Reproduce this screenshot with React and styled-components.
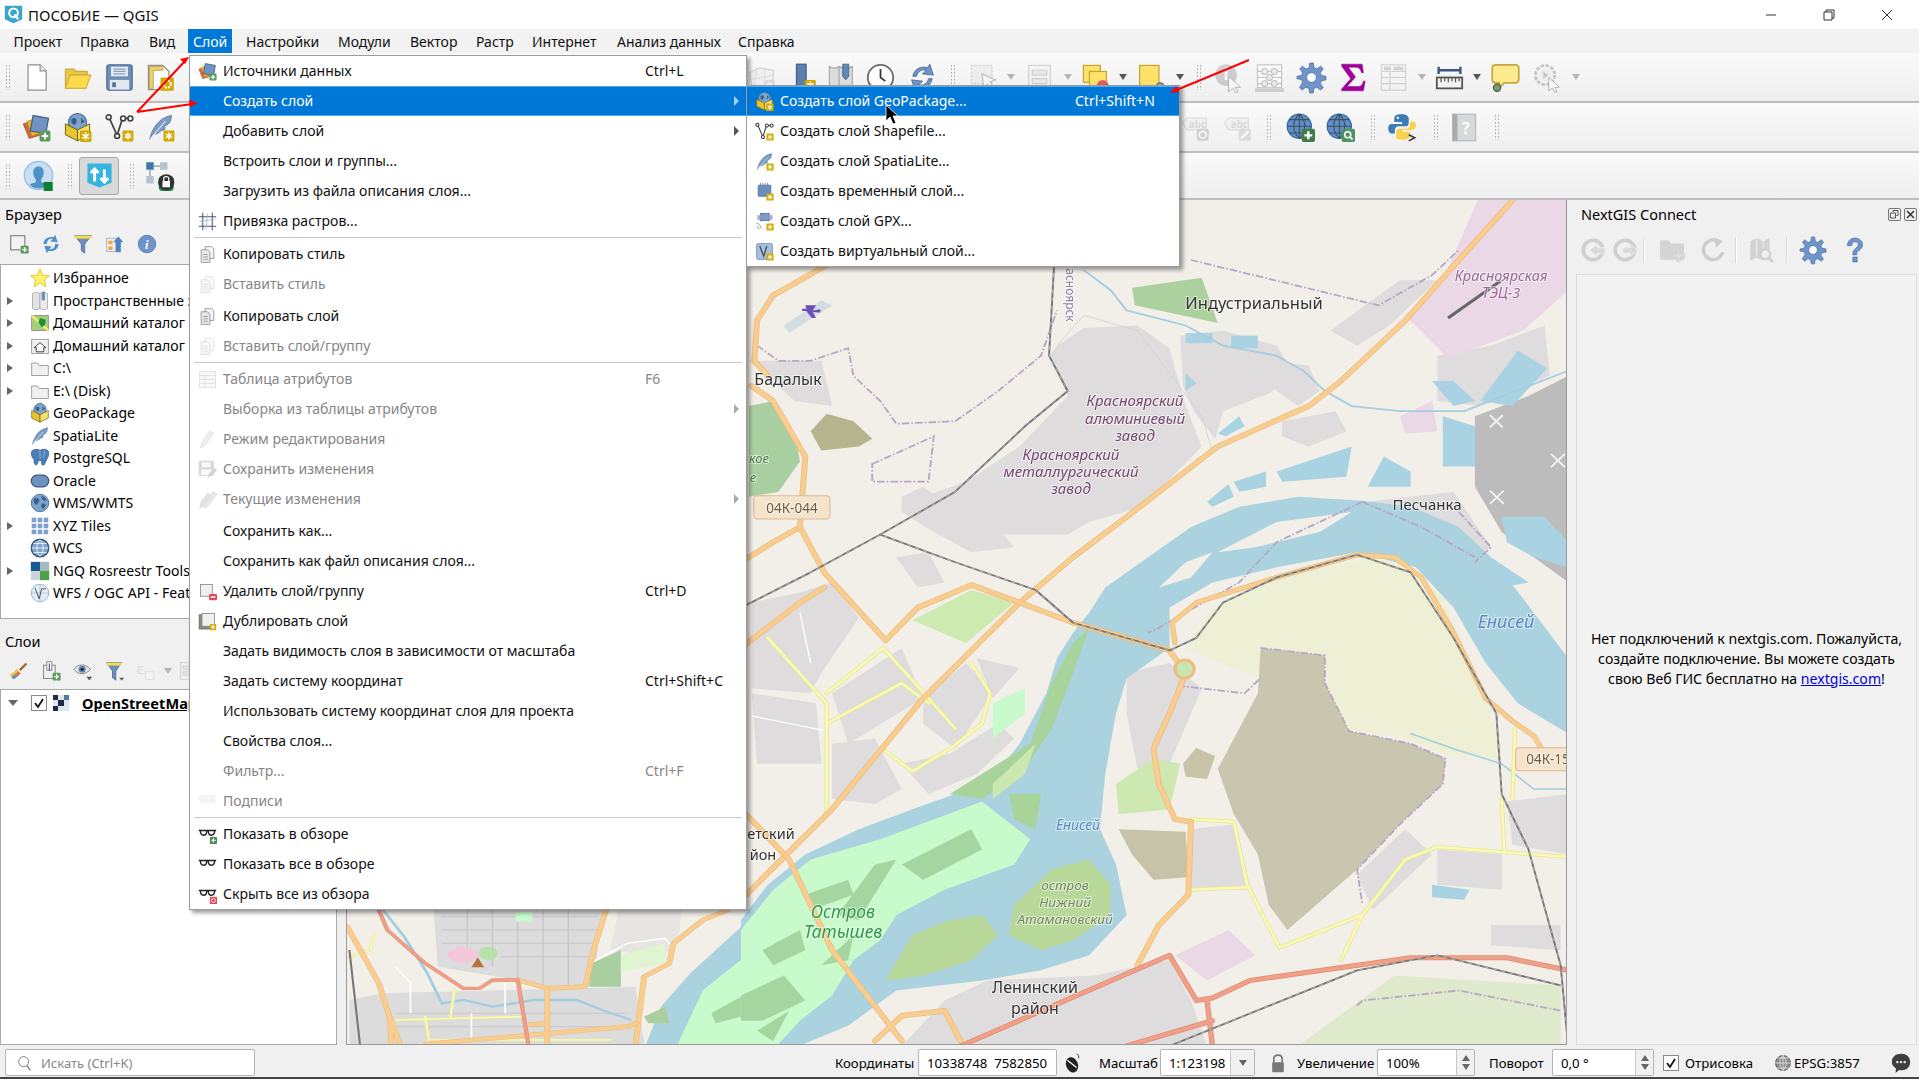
import React from "react";
import styled, { createGlobalStyle } from "styled-components";

const Global = createGlobalStyle`
  html, body { margin: 0; padding: 0; background: #f0f0f0; overflow: hidden; }
  #root { width: 1919px; height: 1079px; }
  * { box-sizing: border-box; }
`;

const FONT = `"Noto Sans", "Open Sans", sans-serif`;

const Window = styled.div`
  position: relative; width: 1919px; height: 1079px; display: flex; flex-direction: column;
  background: #f0f0f0; font: 14px/20px ${FONT}; color: #000; overflow: hidden;
  border-bottom: 2px solid #444;
`;
const TitleBar = styled.div`
  height: 29px; flex: none; background: #fff; display: flex; align-items: center; padding: 0 6px 0 4px; gap: 5px; font-size: 15px; color: #111;
`;
const TitleText = styled.span` flex: 1; `;
const WinBtn = styled.div`
  width: 53px; height: 29px; display: flex; align-items: center; justify-content: center; flex: none;
`;
const MenuBar = styled.div`
  height: 24px; flex: none; display: flex; align-items: center; padding-left: 4px; background: #f2f2f2;
`;
const MenuTop = styled.div`
  width: ${p => p.$w}px; height: 26px; padding-left: ${p => p.$pad}px; line-height: 26px; white-space: nowrap; flex: none; margin-top: 2px;
  background: ${p => (p.$on ? "#0078d7" : "transparent")}; color: ${p => (p.$on ? "#fff" : "#111")};
`;
const Toolbar = styled.div`
  height: ${p => p.$h}px; flex: none; display: flex; align-items: center; border-bottom: 2px solid #bdbdbd;
  background: linear-gradient(#fafafa, #efefef);
`;
const Tool = styled.div`
  width: ${p => p.$w}px; height: 100%; flex: none; display: flex; align-items: center; justify-content: center;
`;
const SunkenTool = styled(Tool)`
  height: 38px; background: #d9d9d9; border: 1px solid #a8a8a8; border-radius: 3px;
`;
const DropArrow = styled.div`
  width: ${p => p.$w}px; flex: none; height: 100%; display: flex; align-items: center; justify-content: center;
  &::after { content: ""; border-left: 4.5px solid transparent; border-right: 4.5px solid transparent; border-top: 6px solid ${p => (p.$off ? "#b5b5b5" : "#555")}; }
`;
const Grip = styled.div`
  width: ${p => p.$w}px; flex: none; height: 100%; display: flex; align-items: center; justify-content: center;
  &::after { content: ""; width: 6px; height: 26px; background-image: radial-gradient(circle, #b0b0b0 0.8px, transparent 1px); background-size: 3px 3.5px; }
`;
const Gap = styled.div` width: ${p => p.$w}px; flex: none; `;

const Main = styled.div` flex: 1; min-height: 0; display: flex; `;
const LeftDock = styled.div` width: 337px; flex: none; display: flex; flex-direction: column; `;
const DockTitle = styled.div` height: 28px; flex: none; padding-left: 5px; line-height: 28px; font-size: 14.5px; `;
const DockTools = styled.div` height: ${p => p.$h}px; flex: none; display: flex; align-items: center; padding: 0 0 ${p => p.$pb || 0}px ${p => p.$pl || 0}px; `;
const TreeFrame = styled.div`
  height: ${p => p.$h}px; flex: ${p => (p.$grow ? 1 : "none")}; background: #fff; border: 1px solid #a9a9a9; padding-top: ${p => p.$pt}px; overflow: hidden; letter-spacing: .06px;
`;
const TreeRow = styled.div` height: 22.5px; display: flex; align-items: center; white-space: nowrap; `;
const TreeArrow = styled.div`
  width: 25px; flex: none; padding-left: 6px; display: flex;
  &::after { content: ""; visibility: ${p => (p.$show ? "visible" : "hidden")}; border-top: 4.5px solid transparent; border-bottom: 4.5px solid transparent; border-left: 6px solid #666; }
`;
const TreeIcon = styled.div` width: 27px; flex: none; display: flex; justify-content: center; `;
const Splitter = styled.div` height: 8px; flex: none; `;
const LayerRow = styled.div` height: 26px; display: flex; align-items: center; white-space: nowrap; `;
const CollapseArrow = styled.div`
  width: 30px; flex: none; padding-left: 7px;
  &::after { content: ""; display: block; width: 0; border-left: 5px solid transparent; border-right: 5px solid transparent; border-top: 6px solid #666; }
`;
const CheckBox = styled.div`
  width: 16px; height: 16px; margin-left: ${p => p.$ml || 0}px; flex: none; background: #fff; border: 1px solid #8a8a8a; display: flex; align-items: center; justify-content: center;
`;
const LayerName = styled.span` font-weight: 700; text-decoration: underline; margin-left: 8px; font-size: 14.5px; `;
const HHandle = styled.div` width: 9px; flex: none; `;
const MapBox = styled.div`
  width: 1221px; flex: none; border: 1px solid #9a9a9a; border-top: none; overflow: hidden; display: flex; background: #f2efe9;
`;
const RightDock = styled.div` flex: 1; min-width: 0; padding-left: 9px; display: flex; flex-direction: column; `;
const DockHead = styled.div` height: 28px; flex: none; display: flex; align-items: center; padding-left: 5px; padding-right: 2px; font-size: 14.5px; gap: 3px; `;
const DockName = styled.div` flex: 1; `;
const FloatBtn = styled.div`
  width: 13px; height: 13px; border: 1px solid #777; border-radius: 2px; display: flex; align-items: center; justify-content: center;
`;
const VSep = styled.div` width: 1px; height: 26px; background: #d8d8d8; flex: none; margin: 0 ${p => p.$m || 0}px; box-shadow: 1px 0 0 #fff; `;
const NoteFrame = styled.div`
  flex: 1; margin-right: 2px; border: 1px solid #dcdcdc; background: #f2f2f2; display: flex; align-items: center; justify-content: center;
  text-align: center; font-size: 14.1px; line-height: 20px;
`;
const NoteText = styled.div` margin-top: -2px; `;
const Link = styled.span` color: #0000e0; text-decoration: underline; `;

const StatusBar = styled.div`
  height: 32px; flex: none; display: flex; align-items: center; font-size: 13.2px; padding-top: 3px;
`;
const SearchBox = styled.div`
  width: 250px; height: 27px; margin-left: 5px; background: #fff; border: 1px solid #b5b5b5; border-radius: 2px; display: flex; align-items: center; padding-left: 11px; gap: 8px; color: #888; font-size: 13px; flex: none;
`;
const Label = styled.div` width: ${p => p.$w}px; margin-left: ${p => p.$ml || 0}px; flex: none; white-space: nowrap; `;
const Field = styled.div`
  width: ${p => p.$w}px; height: 27px; margin-left: ${p => p.$ml || 0}px; flex: none; background: #fff; border: 1px solid #b5b5b5; border-radius: 2px; display: flex; align-items: center; padding-left: 8px; white-space: pre;
`;
const FieldText = styled.div` flex: 1; `;
const SpinCol = styled.div`
  width: ${p => p.$w || 18}px; align-self: stretch; background: #f0f0f0; border-left: 1px solid #c8c8c8; display: flex; flex-direction: column; align-items: center; justify-content: center; gap: 3px;
`;
const Up = styled.div` border-left: 4px solid transparent; border-right: 4px solid transparent; border-bottom: 6px solid #666; `;
const Down = styled.div` border-left: 4px solid transparent; border-right: 4px solid transparent; border-top: 6px solid #666; `;
const StatusIcon = styled.div` width: ${p => p.$w}px; margin-left: ${p => p.$ml || 0}px; flex: none; display: flex; justify-content: center; `;

const PopMenu = styled.div`
  position: absolute; left: ${p => p.$x}px; top: ${p => p.$y}px; width: ${p => p.$w}px; background: #fff; border: 1px solid #9c9c9c; box-shadow: 3px 3px 4px rgba(0,0,0,.38);
`;
const MRow = styled.div`
  height: 30px; display: grid; grid-template-columns: 33px ${p => p.$lw}px 1fr 12px; align-items: center; white-space: nowrap;
  color: ${p => (p.$on ? "#fff" : p.$off ? "#868686" : "#111")};
  background: ${p => (p.$on ? "#0078d7" : "transparent")};
  box-shadow: ${p => (p.$on ? "inset 0 1px 0 #52a8ec, inset 0 -1px 0 #52a8ec" : "none")};
`;
const MIcon = styled.div` display: flex; justify-content: center; padding-left: 2px; `;
const MArrow = styled.div`
  &::after { content: ""; visibility: ${p => (p.$show ? "visible" : "hidden")}; display: block; width: 0; border-top: 5px solid transparent; border-bottom: 5px solid transparent; border-left: 5px solid ${p => (p.$on ? "#9fd0f5" : p.$off ? "#aaa" : "#555")}; }
`;
const MSep = styled.div` height: ${p => p.$h}px; display: flex; align-items: center; padding: 0 4px; &::after { content: ""; flex: 1; height: 1px; background: ${p => (p.$line ? "#c8c8c8" : "transparent")}; } `;
const Overlay = styled.svg` position: absolute; left: 0; top: 0; pointer-events: none; `;
const IconSvg = styled.svg` flex: none; display: block; opacity: ${p => (p.$off ? 0.32 : 1)}; filter: ${p => (p.$off ? "grayscale(1)" : "none")}; overflow: visible; `;
const MapSvg = styled.svg` display: block; flex: none; filter: blur(.55px); `;

/* ---------- icons ---------- */
const StarB = ({ x = 14, y = 14, s = 10 }) => (
  <g transform={`translate(${x} ${y}) scale(${s / 10})`}>
    <rect width="10" height="10" rx="1" fill="#d1a900" />
    <path d="M5 1.5v7M2 3.2l6 3.6M8 3.2L2 6.8" stroke="#fff" strokeWidth="1.3" />
  </g>
);
const PlusB = ({ x = 14, y = 14, s = 10, c = "#5f9a5f" }) => (
  <g transform={`translate(${x} ${y}) scale(${s / 10})`}>
    <rect width="10" height="10" rx="1.5" fill={c} />
    <path d="M5 2v6M2 5h6" stroke="#fff" strokeWidth="1.8" />
  </g>
);
const Globe = ({ c = "#7ea3cd", e = "#3f6a99" }) => (
  <g>
    <circle cx="12" cy="12" r="10.5" fill={c} stroke={e} />
    <path d="M5 7c3-2 5-1 6 1s-1 3-2 5-3 1-4-1-1-3 0-5zM14 4c3 0 5 2 6 5-2 1-4 0-5-1s-2-3-1-4zM14 13c2-1 4 0 5 1-1 3-3 5-4 5s-2-4-1-6z" fill="#3c5f88" />
  </g>
);
const WebGlobe = ({ b }) => (
  <g>
    <circle cx="11" cy="11" r="10" fill="#5e8fc8" stroke="#2e6ca8" />
    <path d="M1 11h20M11 1v20M11 1c-6 5-6 15 0 20M11 1c6 5 6 15 0 20M3 5.5h16M3 16.5h16" stroke="#333" strokeWidth=".9" fill="none" opacity=".7" />
    {b}
  </g>
);
const Geo = () => (
  <g>
    <circle cx="12" cy="8" r="7.5" fill="#7ea3cd" stroke="#4a6f99" />
    <path d="M7 5c3-2 5 0 4 3s-5 2-4-3zM15 4l3 3-3 2z" fill="#3c5f88" />
    <path d="M2 9l10 5v9L2 18z" fill="#e7c62d" stroke="#6e5d10" strokeWidth=".8" />
    <path d="M22 9l-10 5v9l10-5z" fill="#f4e06a" stroke="#6e5d10" strokeWidth=".8" />
  </g>
);
const Feather = ({ c = "#7a9cc6" }) => (
  <g>
    <path d="M3 22C5 12 11 4 21 2c0 6-3 8-6 9 1 1 1 2 0 3-2 0-3 1-4 2-2 2-5 1-6 2z" fill={c} stroke="#56789f" strokeWidth=".7" />
    <path d="M3 22L16 7" stroke="#d9e4f0" strokeWidth=".9" />
  </g>
);
const Vnodes = () => (
  <g fill="none" stroke="#444" strokeWidth="1.4">
    <path d="M3.5 4L10 18.5 14.5 4.5H20" />
    <circle cx="3" cy="3.5" r="2" fill="#fff" /><circle cx="10" cy="19" r="2" fill="#fff" /><circle cx="15" cy="4.5" r="2" fill="#fff" /><circle cx="21" cy="4.5" r="2" fill="#fff" />
  </g>
);
const Stack = () => (
  <g>
    <path d="M1 9l10-3 5 12-10 3z" fill="#d3683c" stroke="#9c4a2a" strokeWidth=".6" />
    <path d="M4 7l10-3 4 12-10 3z" fill="#eeb32c" stroke="#b3851a" strokeWidth=".6" />
    <rect x="8" y="3" width="13" height="13" transform="rotate(10 14 9)" fill="#6f94c4" stroke="#465f82" />
    <PlusB x="14.5" y="14.5" s="9" />
  </g>
);
const Doc2 = () => (
  <g fill="#e8e8e8" stroke="#8c8c8c" strokeWidth="1">
    <path d="M9 2h8l3 3v12H9z" fill="#f4f4f4" />
    <path d="M4 6h8l3 3v13H4z" />
    <path d="M6.5 12h6M6.5 15h6M6.5 18h6" strokeWidth=".9" />
  </g>
);
const Folder = () => <path d="M2 6h7l2 3h11v12H2z" fill="#f0f0f0" stroke="#8f8f8f" />;
const Glasses = ({ b }) => (
  <g>
    <path d="M1 7h22M3 7c0 4 1 6 4 6s4-2 4-5M13 8c0 3 1 5 4 5s4-2 4-6" fill="none" stroke="#222" strokeWidth="1.8" />
    {b}
  </g>
);
const Page = () => (
  <g><rect x="3" y="3" width="15" height="15" fill="#efefef" stroke="#808080" /></g>
);
const Tag = ({ b }) => (
  <g>
    <path d="M1 8l4-4h16v10H5z" fill="#e6e6e6" stroke="#aaa" />
    <text x="6.5" y="12.2" fontSize="8" fontWeight="700" fontFamily={FONT} fill="#999">abc</text>
    {b}
  </g>
);

const ICONS = {
  new: <><path d="M5 1.5h10l5 5v16H5z" fill="#fff" stroke="#8e8e8e" /><path d="M15 1.5v5h5" fill="#eee" stroke="#8e8e8e" /></>,
  open: <><path d="M2 21V5h7l2 2h9v3H6L2 21z" fill="#e8c64a" stroke="#cfa93b" /><path d="M6 10h17l-4 11H2z" fill="#fdd94e" stroke="#d6b23e" /></>,
  save: <><rect x="1.5" y="1.5" width="21" height="21" rx="2" fill="#6f8fb8" stroke="#4f6e96" /><rect x="5" y="3" width="14" height="8" fill="#e6ecf3" /><path d="M7 5h10M7 7h10M7 9h10" stroke="#8aa1bd" /><rect x="4" y="14" width="16" height="8" fill="#e4e8ee" /><rect x="6" y="16" width="3" height="4" fill="#4f6e96" /></>,
  layout: <><path d="M2 2h12l5 5v15H2z" fill="#fff" stroke="#8e8e8e" /><path d="M3 3h11v3H6v15H3z" fill="#f3d36d" stroke="#b6943a" strokeWidth=".7" /><rect x="12" y="12" width="11" height="11" rx="1" fill="#d1a900" /><circle cx="17.5" cy="17.5" r="3" fill="none" stroke="#fff" strokeWidth="1.6" strokeDasharray="1.6 .8" /></>,
  stack: <Stack />,
  geoStar: <><Geo /><StarB x="14" y="14.5" s="9.5" /></>,
  geo: <Geo />,
  vecStar: <><Vnodes /><StarB x="14.5" y="14.5" s="9" /></>,
  featherStar: <><Feather /><StarB x="14.5" y="14.5" s="9" /></>,
  feather: <Feather />,
  user: <><circle cx="12" cy="12" r="11" fill="#c9def0" stroke="#9dc1dc" /><path d="M12 5c3 0 4 2 4 5 0 2-1 4-2 5v2l5 2c-2 2-4 3-7 3s-5-1-7-3l5-2v-2c-1-1-2-3-2-5 0-3 1-5 4-5z" fill="#4d93c8" /><rect x="16" y="17" width="7" height="7" fill="#0e7f2e" /></>,
  sync: <><path d="M2 2h20v16l-10 4-10-4z" fill="#35b4e0" /><path d="M8 17V7M4.8 10L8 6.5 11.2 10M16 7v10M12.8 14L16 17.5 19.2 14" fill="none" stroke="#fff" strokeWidth="2.4" /></>,
  network: <><rect x="1" y="1" width="6" height="6" fill="#3f78ad" /><rect x="12" y="1" width="6" height="6" fill="#b4c5cf" /><rect x="1" y="12" width="6" height="6" fill="#b4c5cf" /><path d="M7 4h5M4 7v5" stroke="#8d9aa5" /><rect x="11" y="12" width="12" height="12" rx="3" fill="#0f8a4a" /><circle cx="17" cy="17" r="6.5" fill="#333" /><rect x="14" y="16" width="6" height="5" fill="#fff" /><path d="M15 16v-2c0-2 4-2 4 0v2" fill="none" stroke="#fff" /></>,
  wire: <><path d="M2 8l8-4 12 2-1 14H4z" fill="#e4e4df" stroke="#8e8e8e" /><path d="M2 14l20-4M8 4l-2 16M15 5l-1 15" stroke="#9a9a9a" fill="none" strokeWidth=".7" /><StarB x="14" y="14" s="9" /></>,
  column: <><rect x="7" y="1" width="8" height="22" fill="#5c7fae" stroke="#3f5f8a" /><StarB x="14" y="14" s="9" /></>,
  mapPin: <><path d="M2 3c3 2 5 2 8 0v19c-3 2-5 2-8 0zM10 3c3 2 7 2 11 0v19c-3 2-7 2-11 0z" fill="#ddd" stroke="#aaa" /><path d="M13 1h5v10l-2.5 3-2.5-3z" fill="#6187b5" stroke="#44648c" strokeWidth=".7" /></>,
  clock: <><circle cx="12" cy="12" r="10.5" fill="#fff" stroke="#6a6a6a" strokeWidth="1.5" /><path d="M12 5v7l4 3" fill="none" stroke="#333" strokeWidth="1.4" /></>,
  refresh: <><path d="M4 11C5 5 11 2 16 4l2-3 3 9-9-1 3-3c-4-1-7 1-8 5z" fill="#6f94c4" stroke="#3c6a9e" strokeWidth=".7" /><path d="M20 13c-1 6-7 9-12 7l-2 3-3-9 9 1-3 3c4 1 7-1 8-5z" fill="#6f94c4" stroke="#3c6a9e" strokeWidth=".7" /></>,
  selectOff: <><rect x="2" y="2" width="17" height="15" fill="#ddd" stroke="#888" strokeDasharray="2 1" /><path d="M11 9l11 5-4.5 1.5L21 21l-2.5 2-3.5-5.5L12 21z" fill="#fff" stroke="#555" /></>,
  formOff: <><rect x="3" y="2" width="18" height="20" fill="#eee" stroke="#888" /><path d="M6 6h12v4H6zM6 13h12v4H6z" fill="#ccc" stroke="#888" /></>,
  yellowRed: <><rect x="2" y="2" width="14" height="14" fill="#fde26a" stroke="#c4a52d" /><rect x="7" y="7" width="14" height="14" fill="#fde26a" stroke="#c4a52d" /><circle cx="18" cy="19" r="5" fill="#e35b5b" /><path d="M15.5 19h5" stroke="#fff" strokeWidth="1.5" /></>,
  yellowSq: <><rect x="3" y="2" width="16" height="18" fill="#fde26a" stroke="#c4a52d" /><circle cx="20" cy="20" r="3.5" fill="#9aa7b5" stroke="#667" /></>,
  identOff: <><circle cx="10" cy="10" r="9" fill="#7b7b7b" /><path d="M10 7v7" stroke="#fff" strokeWidth="2.4" /><circle cx="10.3" cy="4.6" r="1.4" fill="#fff" /><path d="M12 11l10 9-4.5 .3 2.5 3.7-2.4 .6-2-4L12 24z" fill="#fff" stroke="#333" strokeWidth=".8" /></>,
  abacusOff: <><rect x="2" y="1.5" width="20" height="19" fill="#fff" stroke="#666" /><path d="M2 7h20M2 12h20M2 17h20" stroke="#666" /><circle cx="8" cy="7" r="2.4" fill="#ddd" stroke="#666" /><circle cx="16" cy="7" r="2.4" fill="#ddd" stroke="#666" /><circle cx="12" cy="12" r="2.4" fill="#ddd" stroke="#666" /><circle cx="8" cy="17" r="2.4" fill="#ddd" stroke="#666" /><circle cx="16" cy="17" r="2.4" fill="#ddd" stroke="#666" /><rect x="0" y="21" width="24" height="3" fill="#888" /></>,
  gear: <><path d="M10.5 0h3l.6 4 2.3 1 3.2-2.4 2.1 2.1L19.3 8l1 2.4 3.7.6v3l-3.7.6-1 2.4 2.4 3.3-2.1 2.1-3.2-2.4-2.4 1-.6 3.800h-3l-.6-3.800-2.4-1-3.2 2.4-2.1-2.1L4.700 16l-1-2.4L0 13v-2l3.700-.6 1-2.4L2.300 4.700l2.100-2.100L7.600 5l2.400-1z" fill="#6f94c9" stroke="#44699c" strokeWidth=".6" /><circle cx="12" cy="12" r="4" fill="#fff" stroke="#44699c" strokeWidth=".6" /></>,
  sigma: <path d="M3 1h17l1 7h-1.5c-1-3-2-4.5-5-4.5H8.5l6 8-7 8H16c3 0 4-1 5-4.5h1.5L21 23H3v-1.5L10.5 13 3 2.5z" fill="#a1009e" stroke="#7b007a" strokeWidth=".4" />,
  tableOff: <><rect x="2" y="1.5" width="20" height="21" fill="#f3f3f3" stroke="#888" /><path d="M2 7h20M2 12h20M2 17h20M9 7v15" stroke="#888" /><rect x="4" y="3" width="6" height="3" fill="#888" /><rect x="12" y="3" width="8" height="3" fill="#888" /></>,
  ruler: <><path d="M3 3v6M21 3v6M3 6h18" stroke="#35597f" strokeWidth="2" fill="none" /><rect x="1.5" y="12" width="21" height="9" fill="#f2f2f2" stroke="#555" strokeWidth="1.5" /><path d="M5 12v4M8 12v3M11 12v4M14 12v3M17 12v4M20 12v3" stroke="#555" /></>,
  tip: <><path d="M4 1.5h16c2 0 3 1 3 3v9c0 2-1 3-3 3H11l-4 4v-4H4c-2 0-3-1-3-3v-9c0-2 1-3 3-3z" fill="#fdeb8f" stroke="#c7a53b" strokeWidth="1.4" /><circle cx="5" cy="20.5" r="3" fill="#6d9e6e" stroke="#555" /></>,
  gearPlay: <><circle cx="10" cy="10" r="8" fill="#eee" stroke="#666" strokeWidth="2.4" strokeDasharray="3 1.2" /><circle cx="10" cy="10" r="5" fill="#ddd" /><path d="M8.5 7l4 3-4 3z" fill="#666" /><path d="M13 12l9 8-4 .3 2 3.5-2 .6-2-3.800-3 2.500z" fill="#fff" stroke="#333" strokeWidth=".8" /></>,
  labelOff: <Tag b={<><rect x="13" y="13" width="10" height="10" rx="2" fill="#8c8c8c" /><circle cx="18" cy="18" r="2.8" fill="none" stroke="#fff" strokeWidth="1.4" /></>} />,
  labelPen: <Tag b={<><rect x="13" y="13" width="10" height="10" rx="2" fill="#a8a8a8" /><path d="M15 21l6-6" stroke="#fff" strokeWidth="2" /></>} />,
  globePlus: <WebGlobe b={<PlusB x="13" y="13" s="11" c="#3f7d47" />} />,
  globeSearch: <WebGlobe b={<><rect x="13" y="13" width="11" height="11" rx="1.5" fill="#4f9460" /><circle cx="18" cy="18" r="2.5" fill="none" stroke="#fff" strokeWidth="1.3" /><path d="M20 20l2 2" stroke="#fff" strokeWidth="1.3" /></>} />,
  python: <><path d="M12 1c-5 0-6 1.500-6 4v2.500h6.500V9H4C1.500 9 1 11 1 13s1 4 3 4h2.500v-3c0-2 1.500-3 3.500-3h5c2 0 3-1 3-3V5c0-2.500-2-4-6-4z" fill="#3c7bb3" /><path d="M13 22c5 0 6-1.500 6-4v-2.500h-6V14h8c2 0 3-2 3-4s-1-3-3-3h-2v3c0 2-1.500 3-3.500 3h-5c-2 0-3 1-3 3v3c0 2.500 1.500 3 5.500 3z" fill="#f7d24a" /><circle cx="9" cy="4" r="1" fill="#fff" /><path d="M18 18l5 2.500-5 2.500" stroke="#333" fill="none" strokeWidth="1.2" /></>,
  book: <><rect x="3" y="1" width="19" height="22" fill="#d6d8da" stroke="#bbb" /><rect x="3" y="1" width="4" height="22" fill="#a9abad" /><text x="11" y="17" fontSize="13" fontFamily={FONT} fill="#fff" fontWeight="700">?</text></>,
  star: <path d="M12 1l3.2 7.6 8 .7-6.1 5.3 1.9 8L12 18.3 5 22.6l1.9-8L.8 9.3l8-.7z" fill="#fff26b" stroke="#d8bf2a" />,
  bookmarks: <><path d="M3 3c3-2 6-2 9 0v18c-3 2-6 2-9 0z" fill="#e4e4e4" stroke="#aaa" /><path d="M12 3c3-2 6-2 9 0v18c-3 2-6 2-9 0z" fill="#ececec" stroke="#aaa" /><path d="M14 1h4v9l-2 2-2-2z" fill="#6c8fbd" /></>,
  homeMap: <><rect x="2" y="3" width="20" height="18" fill="#a5cf7d" stroke="#888" /><path d="M2 3l20 18" stroke="#f2e96c" strokeWidth="3" /><path d="M12 6l7 2-1 6-4 3-4-6z" fill="#1d8f3c" /></>,
  homeFolder: <><rect x="2" y="4" width="20" height="17" fill="#f0f0f0" stroke="#8f8f8f" /><path d="M12 8l7 6h-2.500v5h-9v-5H5z" fill="#fff" stroke="#333" strokeWidth="1.1" /></>,
  folder: <Folder />,
  pg: <><path d="M2 4c3-3 8-3 10-1 3-2 8-2 10 1 1 3 0 7-2 10-1 2-2 5-3 6-1 1-3 1-3-2v-3c-2 1-3 0-4-1 0 3-1 5-2 6-2 1-3-1-3-3 0-2 0-3-1-4-2-2-3-6-2-9z" fill="#4a7fb8" stroke="#274f7f" strokeWidth=".8" /><path d="M12 3v10M17 3c1 3 0 7-2 9" stroke="#b8d0e8" strokeWidth=".8" fill="none" /></>,
  oracle: <rect x="1.5" y="5" width="21" height="14" rx="7" fill="#6f93c1" stroke="#36577f" strokeWidth="1.5" />,
  globe: <Globe />,
  xyz: <g fill="#7ea0cd"><rect x="2" y="2" width="5.5" height="5.5" /><rect x="9.2" y="2" width="5.5" height="5.5" /><rect x="16.4" y="2" width="5.5" height="5.5" /><rect x="2" y="9.2" width="5.5" height="5.5" /><rect x="9.2" y="9.2" width="5.5" height="5.5" /><rect x="16.4" y="9.2" width="5.5" height="5.5" /><rect x="2" y="16.4" width="5.5" height="5.5" /><rect x="9.2" y="16.4" width="5.5" height="5.5" /><rect x="16.4" y="16.4" width="5.5" height="5.5" /></g>,
  wcs: <><circle cx="12" cy="12" r="10.5" fill="#7ea3cd" stroke="#2f4f74" strokeWidth="1.6" /><path d="M2 12h20M12 2c-5 5-5 15 0 20M12 2c5 5 5 15 0 20M4 6.500h16M4 17.500h16" fill="none" stroke="#f0f4f8" strokeWidth="1.1" /></>,
  ngq: <><rect x="1" y="1" width="11" height="11" fill="#175a96" /><rect x="12" y="1" width="11" height="11" fill="#a8b7c4" /><rect x="1" y="12" width="11" height="11" fill="#cbd4da" /><rect x="12" y="12" width="11" height="11" fill="#4da249" /></>,
  wfs: <><circle cx="12" cy="12" r="10.5" fill="#e3edf6" stroke="#8aaccb" /><path d="M2 12h20M12 2v20" stroke="#aac4dc" /><path d="M6 6l5 13 3-12h5" fill="none" stroke="#555" strokeWidth="1.2" /></>,
  grid: <><path d="M6 1v22M18 1v22M1 6h22M1 18h22" stroke="#444d66" strokeWidth="1.2" /><path d="M2 12l20-3M12 2l-2 20" stroke="#9db4d2" strokeWidth="1" /></>,
  copy: <Doc2 />,
  table: <><rect x="2" y="2" width="20" height="20" fill="#e9e9e9" stroke="#999" /><path d="M2 7h20M2 12h20M2 17h20M9 7v15" stroke="#999" /></>,
  pencil: <path d="M3 23l2-8L15 1l5 3L9 19z" fill="#ccc" stroke="#999" />,
  saveEdit: <><rect x="1.5" y="1.5" width="18" height="18" rx="1" fill="#8d8d8d" stroke="#777" /><rect x="5" y="3" width="11" height="6" fill="#eee" /><rect x="4" y="12" width="13" height="7" fill="#eee" /><path d="M12 23l2-6 7-7 3 3-7 7z" fill="#777" /></>,
  pencils: <><path d="M2 23l2-8L12 4l5 3L7 20z" fill="#aaa" stroke="#888" /><path d="M8 23l2-8L19 2l5 3L13 20z" fill="#bbb" stroke="#888" /></>,
  removeLayer: <><Page /><rect x="14" y="15" width="10" height="8" rx="1.5" fill="#e34a55" /><path d="M16 19h6" stroke="#fff" strokeWidth="1.8" /></>,
  dupLayer: <><rect x="1.5" y="3.5" width="18" height="18" fill="#8d8d7d" stroke="#666" /><rect x="5" y="2" width="16" height="16" fill="#f0f0f0" stroke="#808080" /><StarB x="15" y="15" s="8" /></>,
  labelTag: <path d="M1 8l4-4h16v9H5z" fill="#e0e0e0" stroke="#c8c8c8" />,
  glassPlus: <Glasses b={<PlusB x="15" y="15" s="9" c="#46894f" />} />,
  glass: <Glasses />,
  glassNo: <Glasses b={<><rect x="15" y="15" width="9" height="9" fill="#e34a55" /><circle cx="19.5" cy="19.5" r="2.5" fill="none" stroke="#fff" /></>} />,
  vec: <><Vnodes /><StarB x="14.5" y="14.5" s="9" /></>,
  chip: <><rect x="4" y="4" width="16" height="14" rx="1" fill="#6a8fbf" stroke="#4f6e96" /><path d="M7 1v3M10 1v3M13 1v3M16 1v3" stroke="#777" /><StarB x="14.5" y="14.5" s="9" /></>,
  gpx: <><rect x="7" y="2" width="11" height="9" fill="#7d9cc6" stroke="#506f99" /><rect x="3" y="4" width="4" height="6" fill="#aac" /><rect x="18" y="4" width="4" height="6" fill="#aac" /><path d="M2 14c3 1 5 3 6 7M2 18c2 1 3 2 3 4" stroke="#6f7f8f" fill="none" /><StarB x="14.5" y="14.5" s="9" /></>,
  virtual: <><rect x="2" y="2" width="20" height="20" rx="2" fill="#a6c0dc" stroke="#6a8db3" /><path d="M6 5l5 13 4-13" fill="none" stroke="#444" strokeWidth="1.5" /><StarB x="14.5" y="14.5" s="9" /></>,
  add: <><rect x="2" y="2" width="17" height="17" fill="#f3f3f3" stroke="#8a8a8a" strokeWidth="1.5" /><PlusB x="14" y="14" s="9.5" c="#5f9a5f" /></>,
  refreshB: <><path d="M3 12C3 6 9 2 15 4l2-3 3 9-9-1 3-3C10 5 7 8 7 12z" fill="#4f8fd0" /><path d="M21 12c0 6-6 10-12 8l-2 3-3-9 9 1-3 3c4 1 7-2 7-6z" fill="#4f8fd0" /></>,
  filter: <><path d="M2 2h20l-8 10v11l-4-3v-8z" fill="#6a8fbf" stroke="#4a6d99" /><rect x="2" y="2" width="20" height="3.5" fill="#f7dc4e" /></>,
  collapse: <><rect x="2" y="5" width="11" height="16" fill="#eee" stroke="#aaa" /><rect x="4" y="15" width="5" height="4" fill="#f0a33c" /><rect x="4" y="8" width="5" height="4" fill="#f0a33c" /><path d="M16 3l6 7h-3v12h-6V10h-3z" fill="#4c85be" /></>,
  info: <><circle cx="12" cy="12" r="10.5" fill="#6f94c9" stroke="#527bb3" /><text x="9.5" y="18" fontSize="15" fontStyle="italic" fontWeight="700" fontFamily="Liberation Serif, serif" fill="#fff">i</text></>,
  brush: <><path d="M14 12l8-8-2-2-8 8z" fill="#a56a2a" /><path d="M1 16c3 0 6-3 8-6l5 5c-3 3-6 5-9 6z" fill="#e86d4a" /><path d="M1 16c3 0 6-3 8-6l2 2c-2 3-5 6-8 6z" fill="#f4c93a" /><path d="M3 20l5-5 3 3-5 4z" fill="#6a8fbf" /></>,
  addTable: <><rect x="3" y="5" width="14" height="16" fill="#eee" stroke="#777" /><rect x="7" y="1" width="6" height="10" fill="#fff" stroke="#777" /><path d="M10 3v9" stroke="#55a" strokeWidth="1.4" /><PlusB x="14" y="14" s="9.5" c="#5f9a5f" /></>,
  eye: <><path d="M1 10c5-7 14-7 20 0-6 7-15 7-20 0z" fill="#e4e4e4" stroke="#777" /><circle cx="11" cy="10" r="4.2" fill="#5b84b8" /><circle cx="11" cy="10" r="1.8" fill="#222" /><path d="M16 19h7l-3.5 4z" fill="#555" /></>,
  filter2: <><path d="M2 2h18l-7 10v11l-4-3v-8z" fill="#6a8fbf" stroke="#4a6d99" /><rect x="2" y="2" width="18" height="3.5" fill="#f7dc4e" /><path d="M17 20h6l-3 3.5z" fill="#555" /></>,
  exprOff: <><text x="1" y="15" fontSize="19" fontFamily="Liberation Serif, serif" fill="#9a9a9a">ε</text><rect x="11" y="13" width="10" height="9" fill="#fff" stroke="#aaa" /></>,
  back: <><circle cx="12" cy="12" r="9" fill="none" stroke="#8d8d8d" strokeWidth="3.4" /><path d="M9 12l7-5v3h7v5h-7v3z" fill="#ababab" stroke="#f0f0f0" strokeWidth=".7" /></>,
  fwd: <><circle cx="12" cy="12" r="9" fill="none" stroke="#8d8d8d" strokeWidth="3.4" /><path d="M24 12l-7-5v3h-7v5h7v3z" fill="#ababab" stroke="#f0f0f0" strokeWidth=".7" /></>,
  folderPlus: <><path d="M1 3h8l2 3h12v15H1z" fill="#9a9a9a" /><path d="M18 11v12M12 17h12" stroke="#9a9a9a" strokeWidth="4" /><path d="M18 12v10M13 17h10" stroke="#a5c0a0" strokeWidth="2.2" /></>,
  reload: <><path d="M20 14A9 9 0 1 1 14 3.3" fill="none" stroke="#888" strokeWidth="3.2" /><path d="M12 0l8 4-6 6z" fill="#888" /></>,
  mapSearch: <><path d="M2 4l6-3 6 3 6-3v10l-6 3v8l-6-3-6 3z" fill="#999" /><path d="M8 1v16M14 4v10" stroke="#eee" /><circle cx="16" cy="16" r="4.5" fill="#eee" stroke="#888" strokeWidth="2" /><path d="M19 19l4 4" stroke="#888" strokeWidth="2.4" /></>,
  question: <path d="M5 8c0-4 3-7 7-7s7 3 7 6c0 3-2 4.500-4 6-1.200 1-1.500 1.600-1.500 3.500h-3.500c0-3 .5-4.200 2.500-6 1.500-1.300 2.500-2 2.500-3.500 0-1.400-1.200-2.600-3-2.600S9 5.500 9 8zM10 18.500h4V23h-4z" fill="#6f94c9" stroke="#44699c" strokeWidth=".6" />,
  search: <><circle cx="10" cy="10" r="7.5" fill="none" stroke="#777" strokeWidth="1.4" /><path d="M15 16l5 7" stroke="#777" strokeWidth="1.8" /></>,
  mouse: <><ellipse cx="12" cy="14" rx="6.5" ry="8.5" fill="#222" transform="rotate(-20 12 14)" /><path d="M7 9l10 8M6 5l-3 2M19 2l-2 4" stroke="#fff" strokeWidth="1.4" /><path d="M17 2c2 1 3 3 2 5" stroke="#333" fill="none" /></>,
  lock: <><path d="M7 11V7c0-6 10-6 10 0v4" fill="none" stroke="#777" strokeWidth="2" /><rect x="5" y="11" width="14" height="12" rx="1" fill="#777" /></>,
  earth: <><circle cx="12" cy="12" r="9" fill="#8a8a8a" stroke="#555" /><path d="M1 12h22M12 1v22M5 6h14M5 18h14M12 3c-5 5-5 13 0 18M12 3c5 5 5 13 0 18" stroke="#eee" strokeWidth=".9" fill="none" /></>,
  bubble: <><path d="M12 2c6 0 10 3.500 10 9s-4 9-9 9c-1 0-2 0-3-.3L6 23l.5-5C3.500 16 2 14 2 11c0-5.500 4-9 10-9z" fill="#3f3f3f" /><circle cx="8" cy="11" r="1.3" fill="#fff" /><circle cx="12" cy="11" r="1.3" fill="#fff" /><circle cx="16" cy="11" r="1.3" fill="#fff" /></>,
  logo: <><path d="M1 1h22v17l-11 5-11-5z" fill="#37a6c8" /><circle cx="12" cy="10" r="5.500" fill="none" stroke="#fff" strokeWidth="2.600" /><path d="M13 12l5 6" stroke="#fff" strokeWidth="2.600" /></>,
};

const Ico = ({ n, s = 24, off }) => (
  <IconSvg viewBox="0 0 24 24" width={s} height={s} $off={off}>{ICONS[n]}</IconSvg>
);

/* ---------- data ---------- */
const TOPMENU = [
  ["Проект", 66, 9.5], ["Правка", 70, 10], ["Вид", 48, 9], ["Слой", 44, 5, true], ["Настройки", 97, 14], ["Модули", 72, 9],
  ["Вектор", 66, 9], ["Растр", 56, 9], ["Интернет", 85, 9], ["Анализ данных", 121, 9], ["Справка", 80, 9],
];

const ROW1 = [
  ["g", 15], ["t", 42, "new"], ["t", 41, "open"], ["t", 42, "save"], ["t", 41, "layout"], ["x", 559],
  ["t", 42, "wire", 1], ["t", 40, "column"], ["t", 38, "mapPin"], ["t", 41, "clock"], ["t", 42, "refresh"], ["g", 20],
  ["t", 40, "selectOff", 1], ["a", 15, 1], ["t", 43, "formOff", 1], ["a", 13, 1], ["t", 42, "yellowRed"], ["a", 14], ["t", 40, "yellowSq"], ["a", 20], ["g", 18],
  ["t", 41, "identOff", 1], ["t", 41, "abacusOff", 1], ["t", 42, "gear"], ["t", 41, "sigma"], ["t", 41, "tableOff", 1], ["a", 15, 1], ["t", 41, "ruler"], ["a", 14], ["t", 42, "tip"], ["t", 42, "gearPlay", 1], ["a", 15, 1],
];
const ROW2 = [
  ["g", 15], ["t", 42, "stack"], ["t", 41, "geoStar"], ["t", 42, "vecStar"], ["t", 41, "featherStar"], ["x", 993],
  ["t", 42, "labelOff", 1], ["t", 42, "labelPen", 1], ["g", 22], ["t", 40, "globePlus"], ["t", 41, "globeSearch"], ["g", 24], ["t", 32, "python"], ["g", 38], ["t", 16, "book"], ["g", 52],
];
const TREE = [
  ["Избранное", "star"], ["Пространственные закладки", "bookmarks", 1], ["Домашний каталог проекта", "homeMap", 1], ["Домашний каталог", "homeFolder", 1],
  ["C:\\", "folder", 1], ["E:\\ (Disk)", "folder", 1], ["GeoPackage", "geo"], ["SpatiaLite", "feather"], ["PostgreSQL", "pg"], ["Oracle", "oracle"],
  ["WMS/WMTS", "globe"], ["XYZ Tiles", "xyz", 1], ["WCS", "wcs"], ["NGQ Rosreestr Tools", "ngq", 1], ["WFS / OGC API - Features", "wfs"],
];
const S = h => ({ sep: h });
const L = h => ({ sep: h, line: true });
const MENU = [
  { t: "Источники данных", k: "Ctrl+L", i: "stack" },
  { t: "Создать слой", sub: true, on: true },
  { t: "Добавить слой", sub: true },
  { t: "Встроить слои и группы..." },
  { t: "Загрузить из файла описания слоя..." },
  { t: "Привязка растров...", i: "grid" },
  L(3),
  { t: "Копировать стиль", i: "copy" },
  { t: "Вставить стиль", i: "copy", off: true },
  S(2),
  { t: "Копировать слой", i: "copy" },
  { t: "Вставить слой/группу", i: "copy", off: true },
  L(3),
  { t: "Таблица атрибутов", k: "F6", i: "table", off: true },
  { t: "Выборка из таблицы атрибутов", sub: true, off: true },
  { t: "Режим редактирования", i: "pencil", off: true },
  { t: "Сохранить изменения", i: "saveEdit", off: true },
  { t: "Текущие изменения", i: "pencils", sub: true, off: true },
  S(2),
  { t: "Сохранить как..." },
  { t: "Сохранить как файл описания слоя..." },
  { t: "Удалить слой/группу", k: "Ctrl+D", i: "removeLayer" },
  { t: "Дублировать слой", i: "dupLayer" },
  { t: "Задать видимость слоя в зависимости от масштаба" },
  { t: "Задать систему координат", k: "Ctrl+Shift+C" },
  { t: "Использовать систему координат слоя для проекта" },
  { t: "Свойства слоя..." },
  { t: "Фильтр...", k: "Ctrl+F", off: true },
  { t: "Подписи", i: "labelTag", off: true },
  L(3),
  { t: "Показать в обзоре", i: "glassPlus" },
  { t: "Показать все в обзоре", i: "glass" },
  { t: "Скрыть все из обзора", i: "glassNo" },
];
const SUBMENU = [
  { t: "Создать слой GeoPackage...", k: "Ctrl+Shift+N", i: "geoStar", on: true },
  { t: "Создать слой Shapefile...", i: "vec" },
  { t: "Создать слой SpatiaLite...", i: "featherStar" },
  { t: "Создать временный слой...", i: "chip" },
  { t: "Создать слой GPX...", i: "gpx" },
  { t: "Создать виртуальный слой...", i: "virtual" },
];

const ToolRow = ({ items, h }) => (
  <Toolbar $h={h}>
    {items.map(([kind, w, a, b], i) =>
      kind === "g" ? <Grip key={i} $w={w} />
      : kind === "x" ? <Gap key={i} $w={w} />
      : kind === "a" ? <DropArrow key={i} $w={w} $off={a} />
      : <Tool key={i} $w={w}><Ico n={a} s={29} off={b} /></Tool>
    )}
  </Toolbar>
);

const Popup = ({ items, x, y, w, lw }) => (
  <PopMenu $x={x} $y={y} $w={w}>
    {items.map((m, i) =>
      m.sep ? <MSep key={i} $h={m.sep} $line={m.line} /> : (
        <MRow key={i} $on={m.on} $off={m.off} $lw={lw}>
          <MIcon>{m.i && <Ico n={m.i} s={19} off={m.off} />}</MIcon>
          <span>{m.t}</span>
          <span>{m.k}</span>
          <MArrow $show={m.sub} $on={m.on} $off={m.off} />
        </MRow>
      )
    )}
  </PopMenu>
);

/* ---------- map ---------- */
const Road = ({ d, w = 10, c = "#ecbd80", f = "#f9cd90" }) => (
  <>
    <path d={d} fill="none" stroke={c} strokeWidth={w} strokeLinejoin="round" strokeLinecap="round" />
    <path d={d} fill="none" stroke={f} strokeWidth={w - 3} strokeLinejoin="round" strokeLinecap="round" />
  </>
);
const Yel = ({ d }) => <Road d={d} w={8} c="#e6e69c" f="#f8f9b5" />;
const Red = ({ d }) => <Road d={d} w={10} c="#e08a70" f="#f0a089" />;
const Rail = ({ d }) => (
  <>
    <path d={d} fill="none" stroke="#737373" strokeWidth="3.500" strokeLinejoin="round" />
    <path d={d} fill="none" stroke="#d8d8d8" strokeWidth="1.200" strokeDasharray="8 8" />
  </>
);
const Bound = ({ d }) => <path d={d} fill="none" stroke="#b9a5c6" strokeWidth="3.500" strokeDasharray="14 4 3 4" />;

const MapLabel = styled.text`
  font-family: ${FONT}; font-size: ${p => p.$s || 14}px; text-anchor: middle; fill: ${p => p.$c || "#333"};
  font-style: ${p => (p.$i ? "italic" : "normal")};
  paint-order: stroke; stroke: rgba(255,255,255,.55); stroke-width: 2px;
`;

const MapView = () => (
  <MapSvg width="1219" height="844" viewBox="346 200 1219 844">
    <rect x="346" y="200" width="1219" height="844" fill="#f2efe9" />
    {/* lower-left part, traced on its own scale */}
    <g transform="translate(340 900) scale(.4209 .3333)">
      <path d="M220 30L620 30 600 260 490 260 420 240 230 200Z" fill="#dcdcdc" />
      <path d="M100 280L700 260 720 432 20 432 20 300Z" fill="#dcdcdc" />
      <path d="M660 30L810 30 800 130 760 170 640 150Z" fill="#e7e5e1" />
      <path d="M240 50H610M240 90H610M240 130H610M380 170H600M300 30V190M360 30V200M420 30V240M480 30V255M540 30V260M130 340H680M130 380H680" fill="none" stroke="#c6c6c6" strokeWidth="3" />
      <rect x="415" y="35" width="40" height="30" fill="#c8facc" />
      <ellipse cx="290" cy="165" rx="36" ry="24" fill="#f3c8d8" />
      <ellipse cx="350" cy="160" rx="22" ry="20" fill="#b9e0a8" />
      <path d="M310 202L325 172 340 202Z" fill="#b8763c" />
      <path d="M595 190L665 150 665 260 590 260Z" fill="#a9cfa0" />
      <path d="M665 165L770 130 770 190 665 215Z" fill="#dff5d0" />
      <path d="M100 30L150 110 205 220 240 310 290 300 360 320 460 300 560 300 620 330 690 360" fill="none" stroke="#a3cde0" strokeWidth="7" />
      <path d="M725 432L760 320 830 220 960 70 960 432Z" fill="#aad3df" />
      <path d="M800 432L860 270 960 170 960 432Z" fill="#c8facc" />
      <path d="M720 350L770 320 780 370 730 370Z" fill="#a9cfa0" />
      <path d="M880 340L950 290 950 350 890 370Z" fill="#a5d6a0" />
      <Yel d="M20 170L70 150 80 100" />
      <Yel d="M130 360L430 350M200 350L210 432M260 350L270 270M210 420L640 420" />
      <path d="M600 185L680 130 770 115 785 140M130 200L165 250 165 340M310 340V420M390 250V340" fill="none" stroke="#fff" strokeWidth="4" />
      <Road w={14} d="M15 80L90 250 115 350 120 432M115 350L140 432" />
      <Road w={14} d="M420 240L490 265 580 260 600 150 630 30" />
      <Road w={14} d="M490 270L490 432M440 375L490 370" />
      <Road w={14} d="M700 432L720 230 780 190 790 130 860 60 920 30" />
      <Road w={14} d="M200 432L680 380 700 370" />
      <Red d="M90 30L110 90 200 190 290 265 330 265 360 240 420 240 445 432" />
      <path d="M20 150L45 432" fill="none" stroke="#777" strokeWidth="5" />
    </g>

    <g transform="translate(740 260) scale(.5357 .5038)">
      {/* landuse */}
      <g fill="#dedcdc">
        <path d="M590 170L640 135 740 130 800 175 810 215 830 290 860 370 750 490 650 520 610 545 490 545 380 490 340 470 420 440 520 370 610 270 575 190Z" />
        <path d="M820 150L900 140 1000 170 1035 230 985 265 900 300 885 355 845 300 825 250Z" />
        <path d="M985 200L1060 210 1080 260 1040 290 1000 260Z" />
        <path d="M1010 320L1110 300 1130 340 1060 370 1010 350Z" />
        <path d="M300 470L340 450 420 510 490 545 510 570 430 580 360 540 300 500Z" />
        <path d="M290 590L350 580 380 640 330 650Z" />
        <path d="M20 680L110 660 170 640 220 710 150 820 130 860 20 850Z" />
        <path d="M170 860L300 770 340 870 200 960Z" />
        <path d="M20 860L140 880 150 1000 30 1000Z" />
        <path d="M340 870L420 800 470 860 400 970 340 920Z" />
        <path d="M440 790L520 810 470 870Z" />
        <path d="M300 1000L390 980 480 920 510 950 440 1020 350 1060Z" />
        <path d="M170 960L250 950 300 1050 250 1080 170 1070Z" />
        <path d="M720 820L800 800 860 850 800 1000 740 1010 720 900Z" />
        <path d="M840 1130L920 1120 950 1240 840 1250Z" />
        <path d="M1300 1170L1420 1180 1420 1250 1300 1240Z" />
        <path d="M1430 1075L1544 1060 1544 1180 1440 1160Z" />
        <path d="M1400 1320L1530 1320 1530 1370 1400 1360Z" />
        <path d="M380 1470L460 1430 660 1420 800 1390 840 1470 870 1560 300 1560Z" />
        <path d="M1170 480L1330 460 1400 570 1360 590 1240 510Z" />
        <path d="M1150 1220L1240 1130 1290 1180 1180 1290Z" />
        <path d="M1300 190L1400 170 1500 130 1510 230 1380 290 1300 280Z" />
        <path d="M15 200L150 200 170 290 100 280Z" />
        <path d="M1100 140L1230 40 1300 40 1210 130 1150 170Z" />
      </g>
      <path d="M1370 310L1470 270 1544 230 1544 640 1480 590 1420 540 1370 450Z" fill="#bcbcbc" />
      <path d="M1398 308l24 24M1422 308l-24 24M1512 385l26 26M1538 385l-26 26M1398 458l26 26M1424 458l-26 26" stroke="#f4f4f4" strokeWidth="3.500" />
      <path d="M80 130L150 80 170 90 90 145Z" fill="#d3dde2" />
      <path d="M1240 110L1310 40 1380 -130 1544 -130 1544 60 1460 140 1320 195Z" fill="#ead8e6" />
      <path d="M1230 310L1290 280 1300 340 1240 345Z" fill="#ead8e6" />
      <path d="M810 1380L910 1330 960 1380 870 1430Z" fill="#ead8e6" />
      <path d="M730 55L860 35 890 125 735 90Z" fill="#add19e" />
      <path d="M15 290L60 280 105 370 110 400 70 460 15 470Z" fill="#a9cfa0" />
      <path d="M130 340L160 305 210 320 245 355 220 370 150 378Z" fill="#b5b58d" />
      <path d="M320 715L430 655 510 680 420 760Z" fill="#cdebb0" />
      <path d="M700 1040L770 990 820 1000 800 1090 705 1100Z" fill="#cde8b0" />
      <path d="M1040 1560L1220 1420 1530 1440 1530 1560Z" fill="#dfe9cc" />
      <path d="M470 880L530 850 530 900 470 950Z" fill="#c8facc" />
      <path d="M830 770L880 690 1000 630 1180 590 1250 610 1310 670 1380 850 1420 960 1420 990 1310 980 1240 950 1130 930 1100 860 1090 790 970 775 965 830Z" fill="#eef0d5" />
      <path d="M970 770L1090 785 1090 840 1135 935 1250 960 1315 990 1310 1040 1230 1120 1150 1210 1020 1330 985 1280 965 1180 920 1100 890 1010 965 860Z" fill="#c8c6ae" />
      <path d="M825 1000L850 968 885 985 870 1030 830 1025Z" fill="#c6c3a8" />
      <path d="M705 1130L830 1135 835 1225 770 1230 730 1180Z" fill="#c6c3a8" />
      {/* river */}
      <path d="M1544 790L1480 700 1400 590 1340 530 1250 490 1160 478 1040 470 930 490 840 530 760 590 680 650 650 700 620 740 590 790 570 860 520 960 470 1030 400 1060 320 1090 220 1130 120 1180 50 1240 0 1310 0 1568 90 1568 200 1520 290 1450 450 1430 560 1410 650 1380 720 1300 700 1200 670 1130 680 1020 700 900 720 830 800 770 800 690 880 640 1000 610 1150 580 1260 610 1330 690 1390 800 1450 880 1544 940Z" fill="#aad3df" />
      {/* islands */}
      <path d="M890 580L1000 520 1140 500 1080 540 960 570Z" fill="#f2efe9" />
      <path d="M780 650L830 600 880 580 840 630Z" fill="#f2efe9" />
      <path d="M0 1330L60 1250 130 1190 260 1150 450 1075 540 1150 510 1200 380 1250 290 1300 260 1350 210 1390 170 1460 110 1510 60 1568 0 1568Z" fill="#c8facc" />
      <path d="M0 1460L80 1420 120 1470 40 1510 0 1510ZM40 1370L110 1330 120 1370 60 1400ZM180 1300L250 1200 290 1190 220 1310ZM300 1200L430 1130 450 1170 340 1230ZM120 1260L200 1230 210 1260 130 1290ZM30 1530L90 1490 60 1550ZM150 1400L210 1340 200 1390Z" fill="#a5d6a0" />
      <path d="M500 1340L510 1280 580 1210 650 1190 690 1240 690 1300 620 1350 560 1370Z" fill="#b9d99a" />
      <path d="M270 1430L320 1340 390 1310 450 1300 480 1340 430 1390 340 1420Z" fill="#b9d99a" />
      <path d="M540 960L580 840 620 760 650 730 620 820 580 930 530 1010 450 1070 390 1060Z" fill="#a8d39a" />
      <path d="M470 1040L550 960 530 1020 470 1070Z" fill="#cbe8b0" />
      <path d="M500 1060L560 1060 550 1130 510 1110Z" fill="#a8d39a" />
      {/* ponds */}
      <g fill="#a9d3e2">
        <path d="M890 345L930 310 940 330 905 350Z" />
        <path d="M1000 420L1140 370 1130 430 1010 440Z" />
        <path d="M870 480L910 445 920 470 880 490Z" />
        <path d="M920 440L980 420 980 450 930 460Z" />
        <path d="M1170 450L1200 390 1250 420 1250 450Z" />
        <path d="M1380 280L1450 180 1505 215 1440 290Z" />
        <path d="M1290 240L1330 240 1370 280 1330 290Z" />
        <path d="M830 145L880 145 880 165 830 165Z" />
        <path d="M915 150L965 150 965 175 915 175Z" />
        <path d="M830 225L850 245 830 260Z" />
        <path d="M1310 310L1370 330 1370 410 1310 410Z" />
        <path d="M1420 510L1500 510 1544 560 1544 610 1480 590 1430 560Z" />
        <path d="M1400 590L1470 640 1420 650Z" />
        <path d="M1290 1240L1360 1250 1350 1270 1290 1265Z" />
      </g>
      <path d="M640 20L690 60 720 100 830 130 900 170 1000 190 1050 220 1090 260 1140 290 1230 300 1350 300 1544 220" fill="none" stroke="#a3cde0" strokeWidth="3.500" />
      <path d="M1250 940L1330 970 1420 1000 1480 1050 1544 1050" fill="none" stroke="#a3cde0" strokeWidth="3" />
      {/* boundaries */}
      <Bound d="M30 170L70 200 130 200 200 175 210 230 260 280 290 325 400 320 480 260 560 190 590 100" />
      <Bound d="M245 405L360 350 350 440 245 440Z" />
      <Bound d="M840 0L1190 90 1290 30 1340 -20" />
      <Bound d="M1160 480L1000 560 930 640 780 730 760 740" />
      <Bound d="M1340 500L1400 570 1370 600" />
      <Bound d="M1160 480L1270 530 1370 590" />
      <Bound d="M970 770L1090 785 1090 840 1135 935 1250 960 1315 990 1310 1040 1230 1120 1150 1210 1160 1280" />
      <Bound d="M815 845L940 860 970 830" />
      <Bound d="M1150 1480L1160 1470 1340 1450 1530 1490" />
      {/* roads */}
      <path d="M20 905L160 935M130 800L110 700" fill="none" stroke="#fff" strokeWidth="2.500" />
      <path d="M880 380L860 310 740 140 640 110 590 170" fill="none" stroke="#cfcfcf" strokeWidth="1.500" />
      <Yel d="M50 750L160 880 160 1100M160 920L300 840 350 880M160 860L265 770 350 870 400 930M430 800L465 860 450 920 390 970 320 1015 270 975" />
      <Yel d="M840 1110L920 1115 945 1240 1005 1365 1160 1300 1240 1190 1300 1165 1544 1185M840 1250L945 1245M1160 1300L1120 1390M1420 1070L1425 1175M1445 930L1440 1070" />
      <Road d="M0 1270L170 1090 340 870 520 680 620 590 720 510 890 370 1060 290 1120 240 1240 120 1340 0 1450 -130" w={11} />
      <Road d="M0 600L60 560 110 530 155 620 270 755 330 690 430 645 520 680 620 720 800 775 830 820 800 900 770 970 780 1040 810 1110 840 1115 835 1260 780 1320 740 1400" w={11} />
      <Road d="M20 250L60 280 120 390 110 530M160 10L60 70 30 120 25 200 50 230M0 770L110 680 155 650M0 1090L90 1190 170 1370 300 1550M250 1550L300 1500 380 1490 410 1550" w={11} />
      <Road d="M810 760L805 720 850 680 1000 630 1150 585 1220 590 1270 630 1330 740 1390 870 1440 915 1480 945 1500 980" w={10} />
      <circle cx="828" cy="812" r="18" fill="#c8e6b0" stroke="#ecbd80" strokeWidth="6" />
      <Red d="M410 1560L800 1380 850 1470 880 1465 950 1430 1250 1385 1430 1385 1544 1410M870 1470L880 1560M720 1560L880 1510" />
      <Rail d="M0 690L130 620 260 545 400 600 550 655 620 720 800 775 850 750 900 680 1000 630 1150 585 1250 620 1330 750 1410 900 1420 1060 1470 1170 1530 1400 1544 1560" />
      <Rail d="M260 545L400 460 530 330 610 260 575 190 585 0" />
      <Rail d="M800 1560L1150 1410 1300 1380 1530 1440" />
      <path d="M1320 115L1420 40" stroke="#666" strokeWidth="6" />
      {/* shields */}
      <rect x="24" y="468" width="142" height="46" rx="7" fill="#f6e3cb" stroke="#dcb993" strokeWidth="2" />
      <rect x="1446" y="968" width="120" height="46" rx="7" fill="#f6e3cb" stroke="#dcb993" strokeWidth="2" />
      <path d="M120 90h20l-6 10 14-2v6l-14-1 6 12h-8l-10-14h-8v-4h8z" fill="#6a4fb8" />
    </g>

    <MapLabel x="1253" y="309" $s={16.5}>Индустриальный</MapLabel>
    <MapLabel x="787" y="385" $s={16}>Бадалык</MapLabel>
    <MapLabel x="1426" y="510" $s={15}>Песчанка</MapLabel>
    <MapLabel x="791" y="513" $s={13.5} $c="#6e5b3c">04К-044</MapLabel>
    <MapLabel x="1547" y="764" $s={13.5} $c="#6e5b3c">04К-15</MapLabel>
    {[["Красноярский", 406], ["алюминиевый", 424], ["завод", 441]].map(([t, y]) => <MapLabel key={t} x="1134" y={y} $i $s={15} $c="#75486f">{t}</MapLabel>)}
    {[["Красноярский", 460], ["металлургический", 477], ["завод", 494]].map(([t, y]) => <MapLabel key={t} x="1070" y={y} $i $s={15} $c="#75486f">{t}</MapLabel>)}
    {[["Красноярская", 281], ["ТЭЦ-3", 298]].map(([t, y]) => <MapLabel key={t} x="1500" y={y} $i $s={14.5} $c="#9a6a96">{t}</MapLabel>)}
    <MapLabel x="1505" y="628" $i $s={18} $c="#5a88c0">Енисей</MapLabel>
    <MapLabel x="1077" y="830" $i $s={14} $c="#5a88c0">Енисей</MapLabel>
    {[["Остров", 918], ["Татышев", 938]].map(([t, y]) => <MapLabel key={t} x="842" y={y} $i $s={17.5} $c="#2f9a4a">{t}</MapLabel>)}
    {[["остров", 890], ["Нижний", 907], ["Атамановский", 924]].map(([t, y]) => <MapLabel key={t} x="1064" y={y} $i $s={13.5} $c="#6f8a5e">{t}</MapLabel>)}
    {[["Ленинский", 993], ["район", 1014]].map(([t, y]) => <MapLabel key={t} x="1034" y={y} $s={16}>{t}</MapLabel>)}
    <MapLabel x="770" y="839" $s={14.5}>етский</MapLabel>
    <MapLabel x="762" y="860" $s={14.5}>йон</MapLabel>
    <MapLabel x="758" y="463" $s={13} $i $c="#4f7a4f">кое</MapLabel>
    <MapLabel x="752" y="482" $s={13} $i $c="#4f7a4f">е</MapLabel>
    <MapLabel x="1065" y="295" $s={12} $c="#8f7f9f" transform="rotate(90 1065 295)">асноярск</MapLabel>
  </MapSvg>
);

/* ---------- app ---------- */
export default function App() {
  return (
    <Window>
      <Global />
      <TitleBar>
        <Ico n="logo" s={19} />
        <TitleText>ПОСОБИЕ — QGIS</TitleText>
        <WinBtn><svg width="12" height="12"><path d="M1 6h10" stroke="#333" /></svg></WinBtn>
        <WinBtn><svg width="12" height="12"><path d="M3 3V1h8v8H9M1 3h8v8H1z" fill="none" stroke="#333" /></svg></WinBtn>
        <WinBtn><svg width="12" height="12"><path d="M1 1l10 10M11 1L1 11" stroke="#333" /></svg></WinBtn>
      </TitleBar>
      <MenuBar>
        {TOPMENU.map(([t, w, p, on]) => <MenuTop key={t} $w={w} $pad={p} $on={on}>{t}</MenuTop>)}
      </MenuBar>
      <ToolRow items={ROW1} h={50} />
      <ToolRow items={ROW2} h={50} />
      <Toolbar $h={47}>
        <Grip $w={15} />
        <Tool $w={46}><Ico n="user" s={31} /></Tool>
        <Grip $w={18} />
        <SunkenTool $w={40}><Ico n="sync" s={29} /></SunkenTool>
        <Grip $w={26} />
        <Tool $w={30}><Ico n="network" s={30} /></Tool>
      </Toolbar>
      <Main>
        <LeftDock>
          <DockTitle>Браузер</DockTitle>
          <DockTools $h={36} $pb={4} $pl={3}>
            {["add", "refreshB", "filter", "collapse", "info"].map(n => <Tool key={n} $w={32}><Ico n={n} s={20} /></Tool>)}
          </DockTools>
          <TreeFrame $h={355} $pt={2}>
            {TREE.map(([t, i, a]) => (
              <TreeRow key={t}><TreeArrow $show={a} /><TreeIcon><Ico n={i} s={20} /></TreeIcon><span>{t}</span></TreeRow>
            ))}
          </TreeFrame>
          <Splitter />
          <DockTitle>Слои</DockTitle>
          <DockTools $h={34} $pb={3} $pl={3}>
            {["brush", "addTable", "eye", "filter2"].map(n => <Tool key={n} $w={32}><Ico n={n} s={20} /></Tool>)}
            <Tool $w={30}><Ico n="exprOff" s={20} off /></Tool>
            <DropArrow $w={14} $off />
            <Tool $w={26}><Ico n="formOff" s={20} off /></Tool>
          </DockTools>
          <TreeFrame $grow $pt={0}>
            <LayerRow>
              <CollapseArrow />
              <CheckBox>
                <svg width="12" height="12"><path d="M2 6l3 4 5-8" fill="none" stroke="#111" strokeWidth="1.800" /></svg>
              </CheckBox>
              <TreeIcon>
                <svg width="16" height="16"><rect width="16" height="16" fill="#dfe6ee" /><rect width="5" height="5" fill="#1c2c44" /><rect x="5" y="5" width="6" height="6" fill="#1c2c44" /><rect y="11" width="5" height="5" fill="#1c2c44" /><rect x="11" width="5" height="5" fill="#4e79a8" /></svg>
              </TreeIcon>
              <LayerName>OpenStreetMap</LayerName>
            </LayerRow>
          </TreeFrame>
        </LeftDock>
        <HHandle />
        <MapBox><MapView /></MapBox>
        <RightDock>
          <DockHead>
            <DockName>NextGIS Connect</DockName>
            <FloatBtn><svg width="9" height="9"><path d="M3 2V.5h5v5H6.500M.5 3h5v5h-5z" fill="none" stroke="#555" /></svg></FloatBtn>
            <FloatBtn><svg width="9" height="9"><path d="M1 1l7 7M8 1L1 8" stroke="#333" strokeWidth="1.500" /></svg></FloatBtn>
          </DockHead>
          <DockTools $h={46} $pb={3}>
            <Tool $w={33}><Ico n="back" s={26} off /></Tool>
            <Tool $w={31}><Ico n="fwd" s={26} off /></Tool>
            <VSep $m={3} />
            <Tool $w={49}><Ico n="folderPlus" s={26} off /></Tool>
            <Tool $w={36}><Ico n="reload" s={26} off /></Tool>
            <VSep $m={3} />
            <Tool $w={44}><Ico n="mapSearch" s={26} off /></Tool>
            <VSep $m={3} />
            <Tool $w={46}><Ico n="gear" s={26} /></Tool>
            <Tool $w={38}><Ico n="question" s={26} /></Tool>
          </DockTools>
          <NoteFrame>
            <NoteText>
              Нет подключений к nextgis.com. Пожалуйста,<br />
              создайте подключение. Вы можете создать<br />
              свою Веб ГИС бесплатно на <Link>nextgis.com</Link>!
            </NoteText>
          </NoteFrame>
        </RightDock>
      </Main>
      <StatusBar>
        <SearchBox><Ico n="search" s={16} />Искать (Ctrl+K)</SearchBox>
        <Label $ml={580} $w={83}>Координаты</Label>
        <Field $w={139}>10338748  7582850</Field>
        <StatusIcon $w={30}><Ico n="mouse" s={22} /></StatusIcon>
        <Label $ml={12} $w={61}>Масштаб</Label>
        <Field $w={95}><FieldText>1:123198</FieldText><SpinCol $w={24}><Down /></SpinCol></Field>
        <StatusIcon $ml={10} $w={26}><Ico n="lock" s={20} /></StatusIcon>
        <Label $ml={6} $w={80}>Увеличение</Label>
        <Field $w={98}><FieldText>100%</FieldText><SpinCol><Up /><Down /></SpinCol></Field>
        <Label $ml={14} $w={63}>Поворот</Label>
        <Field $w={102}><FieldText>0,0 °</FieldText><SpinCol><Up /><Down /></SpinCol></Field>
        <CheckBox $ml={9}>
          <svg width="12" height="12"><path d="M2 6l3 4 5-8" fill="none" stroke="#111" strokeWidth="1.800" /></svg>
        </CheckBox>
        <Label $ml={6} $w={80}>Отрисовка</Label>
        <StatusIcon $ml={7} $w={22}><Ico n="earth" s={20} /></StatusIcon>
        <Label $w={97}>EPSG:3857</Label>
        <StatusIcon $w={20}><Ico n="bubble" s={22} /></StatusIcon>
      </StatusBar>

      <Popup items={MENU} x={189} y={55} w={558} lw={422} />
      <Popup items={SUBMENU} x={746} y={85} w={434} lw={295} />

      <Overlay width="1919" height="1079" viewBox="0 0 1919 1079">
        <g fill="none" stroke="#ff0000" strokeWidth="2">
          <path d="M137 112L186 60M137 112L192 104M1249 60L1174 91" />
        </g>
        <path d="M189 57l-9 2 5 5zM198 103l-9-3 1 7zM1170 93l9-1-3-6z" fill="#ff0000" />
        <path d="M886 105l0 16 4-4 3 7 3-1-3-7 5 0z" fill="#000" stroke="#fff" strokeWidth=".8" />
      </Overlay>
    </Window>
  );
}
